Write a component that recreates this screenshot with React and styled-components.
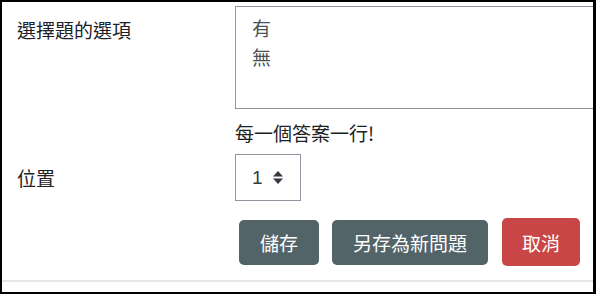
import React from 'react';
import styled, { createGlobalStyle } from 'styled-components';

const GlobalStyle = createGlobalStyle`
  html, body {
    margin: 0;
    padding: 0;
    background: #ffffff;
  }
  body {
    font-family: 'Noto Sans CJK TC', 'Noto Sans', 'Liberation Sans', sans-serif;
  }
`;

const Frame = styled.div`
  width: 596px;
  height: 294px;
  box-sizing: border-box;
  border: 2px solid #000;
  border-right-width: 3px;
  overflow: hidden;
  background: #fff;
  display: flex;
  flex-direction: column;
`;

const FormRow = styled.div`
  display: grid;
  grid-template-columns: 218px 1fr;
  align-items: ${(p) => (p.$center ? 'center' : 'start')};
  padding-left: 15px;
  margin-top: ${(p) => p.$top || 0}px;
`;

const Label = styled.label`
  font-size: 19px;
  line-height: 28px;
  color: #1d2125;
  padding-top: ${(p) => p.$pad || 0}px;
`;

const Control = styled.div`
  min-width: 0;
  display: flex;
  flex-direction: column;
  align-items: flex-start;
`;

const Textarea = styled.textarea`
  width: 400px;
  height: 103px;
  box-sizing: border-box;
  border: 1px solid #8f959e;
  border-radius: 0;
  padding: 7px 16px;
  margin: 0;
  font-family: inherit;
  font-size: 19px;
  line-height: 28.5px;
  color: #495057;
  resize: none;
  outline: none;
  overflow: hidden;
  flex-shrink: 0;
`;

const Help = styled.div`
  margin-top: 10px;
  font-size: 19px;
  line-height: 28px;
  color: #1d2125;
`;

const Select = styled.div`
  width: 66px;
  height: 47px;
  box-sizing: border-box;
  border: 1px solid #8f959e;
  display: flex;
  align-items: center;
  padding-left: 16px;
  gap: 10px;
  font-family: 'Liberation Sans', 'Noto Sans', sans-serif;
  font-size: 19px;
  color: #343a40;
`;

const Buttons = styled.div`
  display: flex;
  align-items: center;
  gap: 13px;
  margin: 17px 0 0 237px;
`;

const Button = styled.button`
  height: ${(p) => (p.$danger ? 48 : 45)}px;
  padding: 0 ${(p) => (p.$danger ? 20 : 21)}px;
  margin-left: ${(p) => (p.$danger ? 1 : 0)}px;
  border: none;
  border-radius: 5px;
  background: ${(p) => (p.$danger ? '#c84646' : '#536469')};
  color: #fff;
  font-family: inherit;
  font-size: 19px;
  line-height: 1;
  cursor: pointer;
`;

const Divider = styled.hr`
  margin: 14px 0 0;
  border: none;
  border-top: 2px solid #e4e6ea;
`;

const SortArrows = () => (
  <svg width="10" height="13" viewBox="0 0 10 13">
    <path d="M5 0 L10 5.5 L0 5.5 Z" fill="#343a40" />
    <path d="M0 7.5 L10 7.5 L5 13 Z" fill="#343a40" />
  </svg>
);

const App = () => {
  return (
    <>
      <GlobalStyle />
      <Frame>
        <FormRow $top={4}>
          <Label $pad={10}>選擇題的選項</Label>
          <Control>
            <Textarea defaultValue={'有\n無'} />
            <Help>每一個答案一行!</Help>
          </Control>
        </FormRow>
        <FormRow $center $top={7}>
          <Label>位置</Label>
          <Control>
            <Select>
              <span>1</span>
              <SortArrows />
            </Select>
          </Control>
        </FormRow>
        <Buttons>
          <Button>儲存</Button>
          <Button>另存為新問題</Button>
          <Button $danger>取消</Button>
        </Buttons>
        <Divider />
      </Frame>
    </>
  );
};

export default App;
